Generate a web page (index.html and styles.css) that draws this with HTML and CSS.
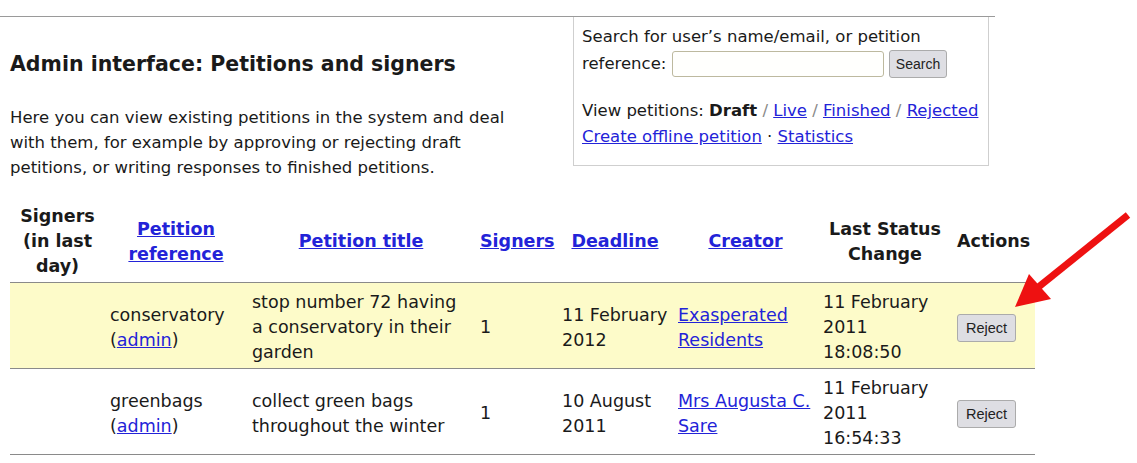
FILE: index.html
```html
<!DOCTYPE html>
<html lang="en">
<head>
<meta charset="utf-8">
<title>Admin interface: Petitions and signers</title>
<link rel="stylesheet" href="styles.css">
</head>
<body>
<div class="topline"></div>
<div class="top">
  <div class="intro">
    <h2 class="title">Admin interface: Petitions and signers</h2>
    <p class="lead">Here you can view existing petitions in the system and deal with them, for example by approving or rejecting draft petitions, or writing responses to finished petitions.</p>
  </div>
  <div class="searchbox">
    <form class="search-form">
      Search for user’s name/email, or petition reference: <input class="search-input" type="text"> <button class="btn" type="button">Search</button>
    </form>
    <p class="views">
      View petitions: <b>Draft</b> <span class="sep">/</span> <a href="#">Live</a> <span class="sep">/</span> <a href="#">Finished</a> <span class="sep">/</span> <a href="#">Rejected</a><br>
      <a href="#">Create offline petition</a> · <a href="#">Statistics</a>
    </p>
  </div>
</div>

<table class="petitions">
  <colgroup>
    <col class="c1"><col class="c2"><col class="c3"><col class="c4"><col class="c5"><col class="c6"><col class="c7"><col class="c8">
  </colgroup>
  <thead>
    <tr>
      <th>Signers<br>(in last<br>day)</th>
      <th><a href="#">Petition<br>reference</a></th>
      <th><a href="#">Petition title</a></th>
      <th><a href="#">Signers</a></th>
      <th><a href="#">Deadline</a></th>
      <th><a href="#">Creator</a></th>
      <th>Last Status<br>Change</th>
      <th>Actions</th>
    </tr>
  </thead>
  <tbody>
    <tr class="hl">
      <td></td>
      <td>conservatory<br>(<a href="#">admin</a>)</td>
      <td>stop number 72 having a conservatory in their garden</td>
      <td>1</td>
      <td>11 February 2012</td>
      <td><a href="#">Exasperated Residents</a></td>
      <td>11 February 2011 18:08:50</td>
      <td><button class="btn btn-row" type="button">Reject</button></td>
    </tr>
    <tr>
      <td></td>
      <td>greenbags<br>(<a href="#">admin</a>)</td>
      <td>collect green bags throughout the winter</td>
      <td>1</td>
      <td>10 August 2011</td>
      <td><a href="#">Mrs Augusta C. Sare</a></td>
      <td>11 February 2011 16:54:33</td>
      <td><button class="btn btn-row" type="button">Reject</button></td>
    </tr>
  </tbody>
</table>

<svg class="arrow" width="137" height="120" viewBox="1000 200 137 120" aria-hidden="true">
  <line x1="1036" y1="289" x2="1128" y2="215" stroke="#ee1111" stroke-width="7"/>
  <polygon points="1015,307 1029,274 1051,299" fill="#ee1111"/>
</svg>
</body>
</html>
```

FILE: styles.css
```css
html, body {
  margin: 0;
  padding: 0;
  background: #ffffff;
}
body {
  font-family: "DejaVu Sans", Verdana, sans-serif;
  font-size: 16.5px;
  color: #1a1a1a;
  position: relative;
}
a {
  color: #2323d8;
  text-decoration: underline;
}
.topline {
  margin-top: 16px;
  width: 995px;
  border-top: 1px solid #9a9a9a;
}
.top {
  display: flex;
  align-items: flex-start;
  width: 989px;
}
.intro {
  padding-left: 10px;
  width: 525px;
}
.title {
  margin: 35px 0 0;
  font-size: 20.5px;
  line-height: 25px;
  font-weight: bold;
}
.lead {
  margin: 28px 0 0;
  line-height: 25px;
}
.searchbox {
  margin-left: auto;
  width: 416px;
  box-sizing: border-box;
  border: 1px solid #cfcfcf;
  border-top: none;
  padding: 7px 8px 15px;
  line-height: 26px;
}
.search-form {
  margin: 0;
}
.search-input {
  width: 212px;
  height: 26px;
  box-sizing: border-box;
  border: 1px solid #bdb99f;
  border-radius: 3px;
  background: #fffffd;
  vertical-align: middle;
  margin: 0;
  padding: 0 4px;
}
.btn {
  font-family: "Liberation Sans", Arial, sans-serif;
  font-size: 14px;
  color: #222;
  background: #dedee3;
  border: 1px solid #ababab;
  border-radius: 3px;
  height: 28px;
  padding: 0 6px;
  vertical-align: middle;
  margin: 0;
}
.views {
  margin: 20px 0 0;
}
.sep {
  color: #8a8a8a;
}
.petitions {
  margin: 19px 0 0 10px;
  width: 1025px;
  table-layout: fixed;
  border-collapse: collapse;
  font-size: 17.5px;
  line-height: 25px;
}
.c1 { width: 95px; }
.c2 { width: 142px; }
.c3 { width: 228px; }
.c4 { width: 82px; }
.c5 { width: 116px; }
.c6 { width: 145px; }
.c7 { width: 134px; }
.c8 { width: 83px; }
.petitions th {
  padding: 5px 5px 3px;
  text-align: center;
  vertical-align: middle;
  font-weight: bold;
  border-bottom: 1px solid #8a8a8a;
}
.petitions td {
  padding: 7px 5px 3px;
  text-align: left;
  vertical-align: middle;
  border-bottom: 1px solid #8a8a8a;
}
.petitions tr.hl td {
  background: #fdfbc9;
}
.btn-row {
  height: 28px;
  font-size: 14.5px;
  padding: 0 8px;
}
.arrow {
  position: absolute;
  left: 1000px;
  top: 200px;
  overflow: visible;
}
```
